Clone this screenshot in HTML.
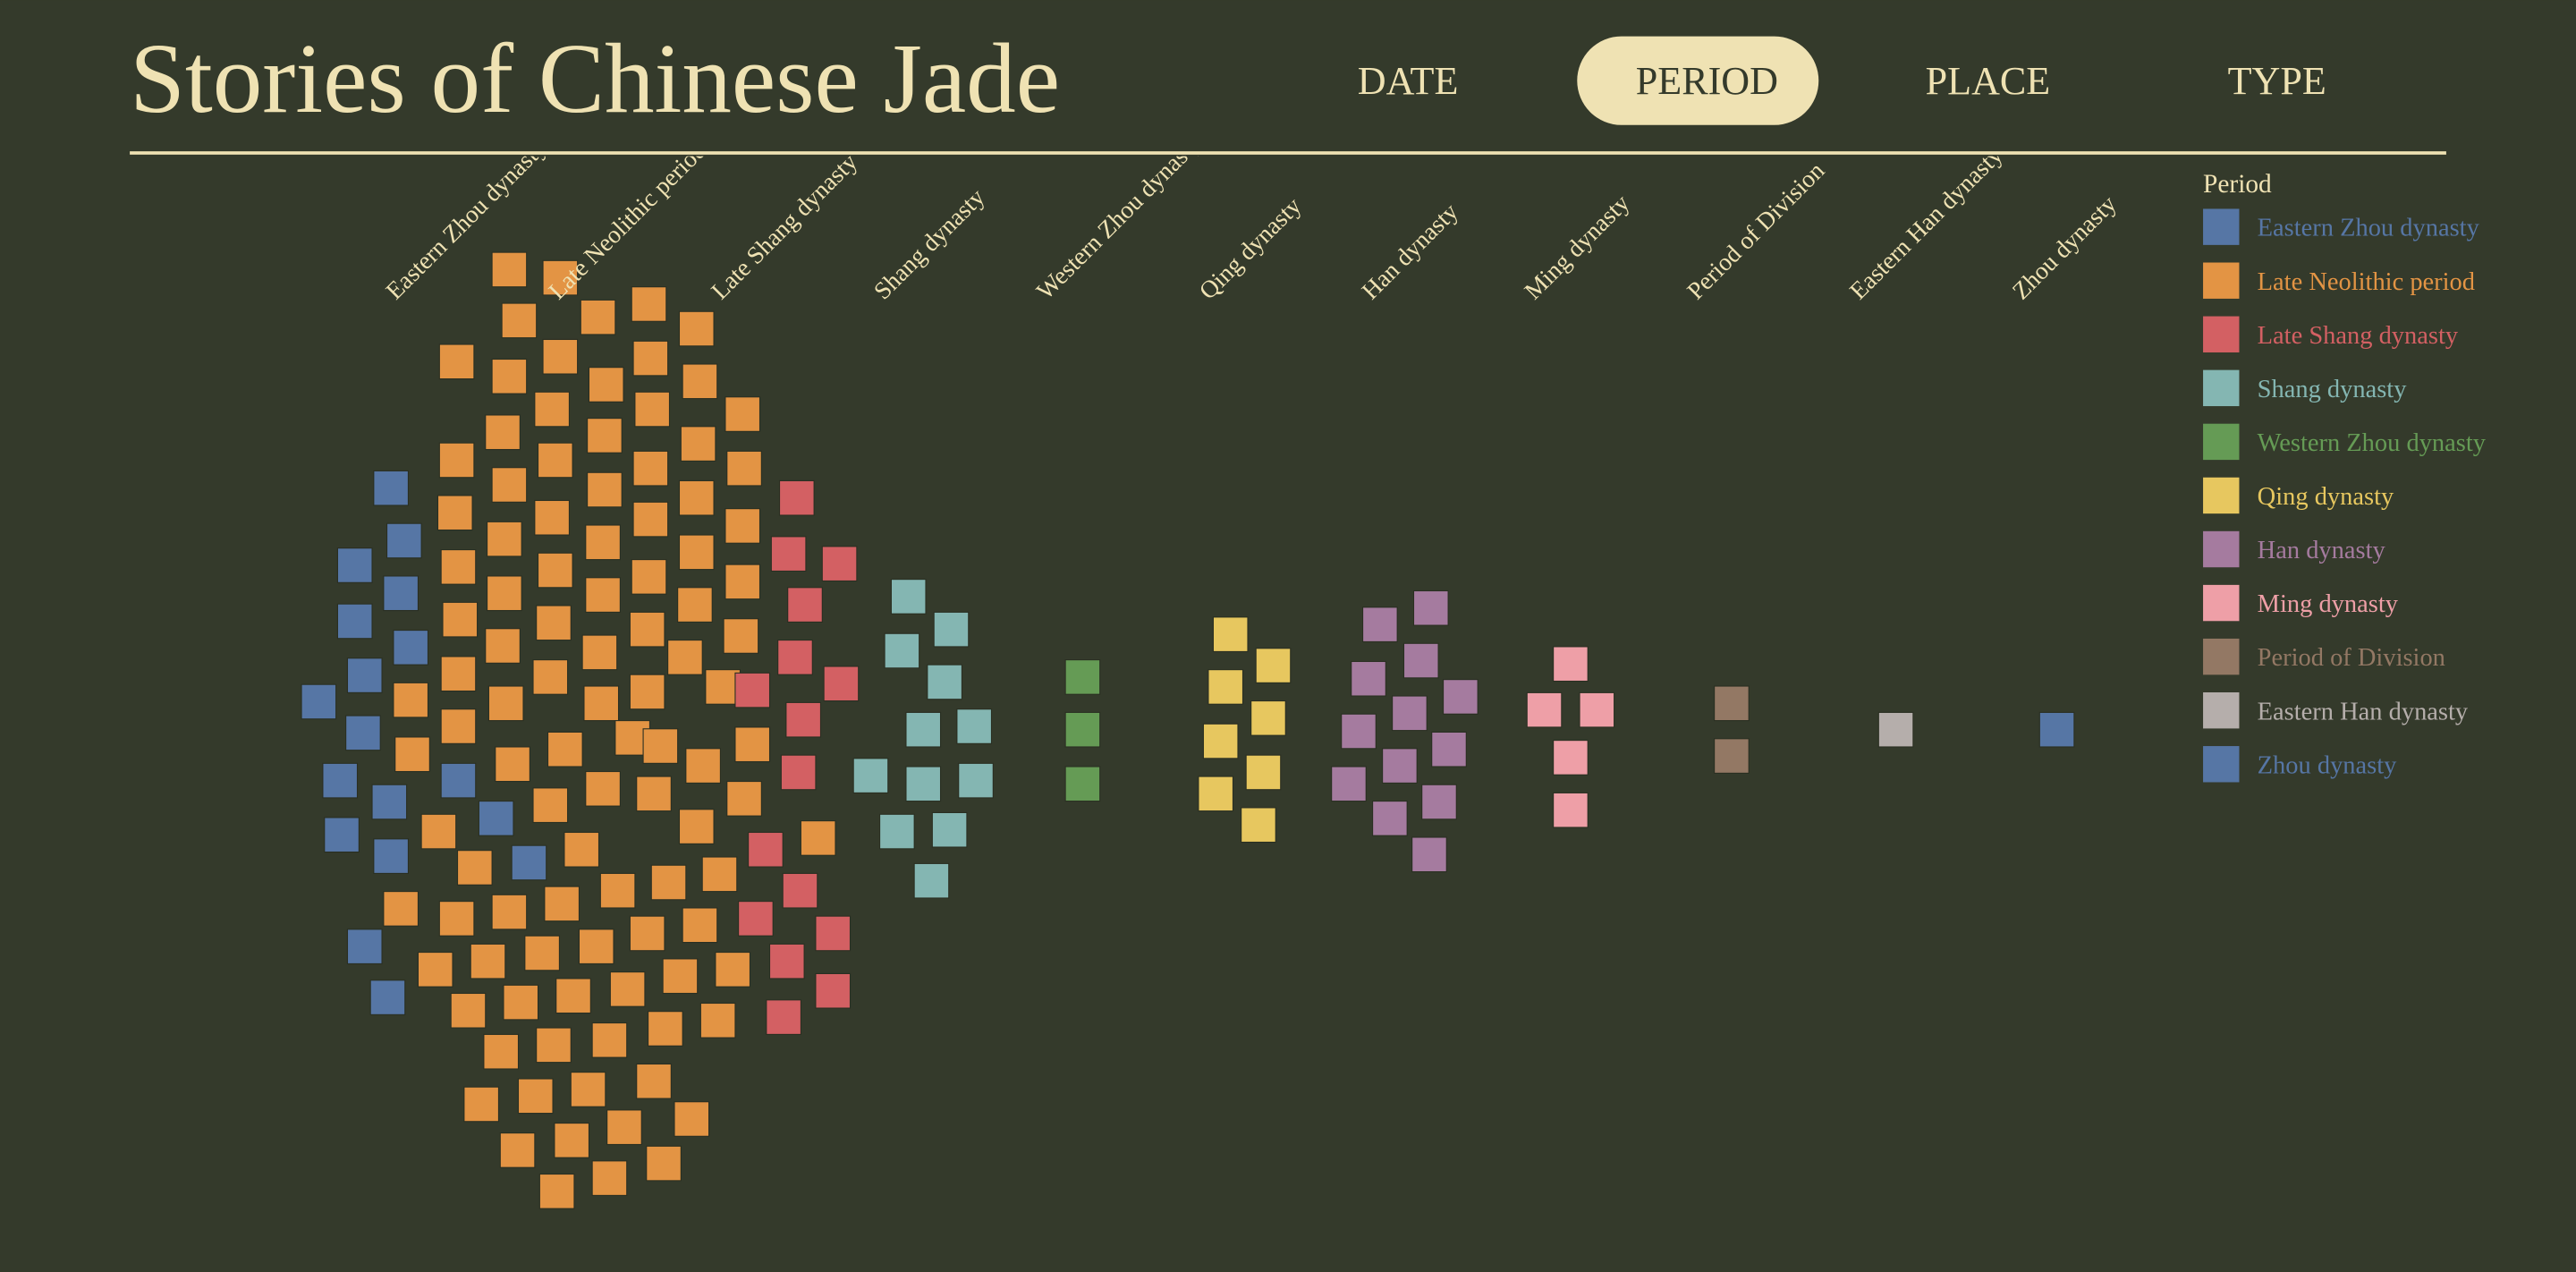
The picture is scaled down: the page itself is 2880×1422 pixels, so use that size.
<!DOCTYPE html>
<html><head><meta charset="utf-8"><style>
html,body{margin:0;padding:0;background:#343a2b;width:2880px;height:1422px;overflow:hidden}
svg{display:block}
text{font-family:"Liberation Serif",serif}
.sq rect{stroke:#2a2f22;stroke-width:.6}
</style></head><body>
<svg width="2880" height="1422" viewBox="0 0 1568 774" xmlns="http://www.w3.org/2000/svg">
<defs><clipPath id="cl"><rect x="0" y="95" width="1330" height="300"/></clipPath></defs>
<rect width="1568" height="774" fill="#343a2b"/>
<text x="79" y="68" font-size="60.5" fill="#efe2b3">Stories of Chinese Jade</text>
<rect x="960" y="22" width="147" height="54" rx="27" fill="#efe2b3"/>
<g font-size="24" fill="#efe2b3" text-anchor="middle">
<text x="857" y="57">DATE</text>
<text x="1039" y="57" fill="#343a2b">PERIOD</text>
<text x="1210" y="57">PLACE</text>
<text x="1386" y="57">TYPE</text>
</g>
<rect x="79" y="92" width="1410" height="2" fill="#efe2b3"/>
<g id="pts"></g>
<g font-size="15" fill="#efe2b3" clip-path="url(#cl)">
<text transform="translate(241,183) rotate(-45)">Eastern Zhou dynasty</text>
<text transform="translate(340,183) rotate(-45)">Late Neolithic period</text>
<text transform="translate(439,183) rotate(-45)">Late Shang dynasty</text>
<text transform="translate(538,183) rotate(-45)">Shang dynasty</text>
<text transform="translate(637,183) rotate(-45)">Western Zhou dynasty</text>
<text transform="translate(736,183) rotate(-45)">Qing dynasty</text>
<text transform="translate(835,183) rotate(-45)">Han dynasty</text>
<text transform="translate(934,183) rotate(-45)">Ming dynasty</text>
<text transform="translate(1033,183) rotate(-45)">Period of Division</text>
<text transform="translate(1132,183) rotate(-45)">Eastern Han dynasty</text>
<text transform="translate(1231,183) rotate(-45)">Zhou dynasty</text>
</g>
<g font-size="16">
<text x="1341" y="117" fill="#efe2b3">Period</text>
</g>
<g id="leg"></g>
</svg>
<script>
const C={ez:"#5676a5",ln:"#e39444",ls:"#d36063",sh:"#84b6b2",wz:"#659b55",qi:"#e7c75f",ha:"#a57b9f",mi:"#ee9fa7",pd:"#937864",eh:"#b5aeab",zh:"#5676a5"};
const D={
ln:[[310,164],[341,169],[316,195],[364,193],[395,185],[278,220],[341,217],[424,200],[310,229],[369,234],[396,218],[336,249],[426,232],[306,263],[368,265],[397,249],[452,252],[278,280],[338,280],[425,270],[310,295],[368,298],[396,285],[453,285],[277,312],[336,315],[424,303],[307,328],[367,330],[396,316],[452,320],[279,345],[338,347],[424,336],[307,361],[367,362],[395,351],[452,354],[280,377],[337,379],[423,368],[306,393],[365,397],[394,383],[451,387],[279,410],[335,412],[417,400],[250,426],[308,428],[366,428],[394,421],[440,418],[279,442],[344,456],[385,449],[251,459],[312,465],[367,480],[402,454],[428,466],[458,453],[335,490],[398,483],[453,486],[267,506],[354,517],[424,503],[498,510],[289,528],[376,542],[407,537],[438,532],[244,553],[310,555],[342,550],[278,559],[363,576],[394,568],[426,563],[265,590],[297,585],[330,580],[285,615],[317,610],[349,606],[382,602],[414,594],[446,590],[305,640],[337,636],[371,633],[405,626],[437,621],[293,672],[326,667],[358,663],[398,658],[315,700],[348,694],[380,686],[421,681],[339,725],[371,717],[404,708]],
ez:[[238,297],[246,329],[216,344],[244,361],[216,378],[250,394],[222,411],[194,427],[221,446],[207,475],[237,488],[279,475],[208,508],[238,521],[302,498],[322,525],[222,576],[236,607]],
ls:[[485,303],[480,337],[511,343],[490,368],[484,400],[512,416],[458,420],[489,438],[486,470],[466,517],[487,542],[460,559],[507,568],[479,585],[507,603],[477,619]],
sh:[[553,363],[579,383],[549,396],[575,415],[562,444],[593,442],[530,472],[562,477],[594,475],[546,506],[578,505],[567,536]],
wz:[[659,412],[659,444],[659,477]],
qi:[[749,386],[775,405],[746,418],[772,437],[743,451],[769,470],[740,483],[766,502]],
ha:[[840,380],[871,370],[865,402],[833,413],[889,424],[858,434],[827,445],[882,456],[852,466],[821,477],[876,488],[846,498],[870,520]],
mi:[[956,404],[940,432],[972,432],[956,461],[956,493]],
pd:[[1054,428],[1054,460]],
eh:[[1154,444]],
zh:[[1252,444]]};
let s='<g class="sq">';
for(const k in D)for(const [x,y] of D[k])s+=`<rect x="${x-10.5}" y="${y-10.5}" width="21" height="21" fill="${C[k]}"/>`;
s+='</g>';
document.getElementById('pts').outerHTML=s;
const L=[["ez","Eastern Zhou dynasty"],["ln","Late Neolithic period"],["ls","Late Shang dynasty"],["sh","Shang dynasty"],["wz","Western Zhou dynasty"],["qi","Qing dynasty"],["ha","Han dynasty"],["mi","Ming dynasty"],["pd","Period of Division"],["eh","Eastern Han dynasty"],["zh","Zhou dynasty"]];
let g='';
L.forEach(([k,t],i)=>{const y=138+i*32.7;g+=`<rect x="1341" y="${y-11}" width="22" height="22" fill="${C[k]}"/><text x="1374" y="${y+5.5}" font-size="15.5" fill="${C[k]}">${t}</text>`;});
document.getElementById('leg').outerHTML=g;
</script>
</body></html>
